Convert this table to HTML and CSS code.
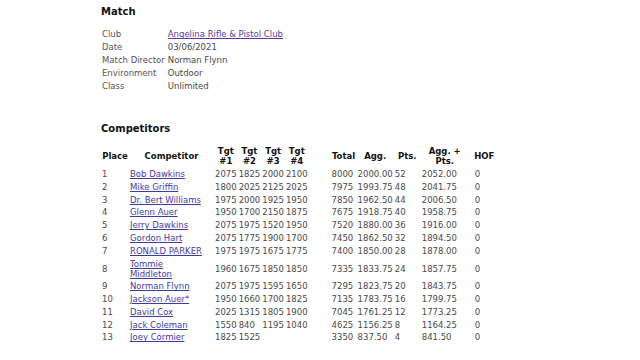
FILE: index.html
```html
<!DOCTYPE html>
<html>
<head>
<meta charset="utf-8">
<link rel="stylesheet" href="styles.css">
</head>
<body>
<div class="page">
  <h2 class="heading">Match</h2>
  <table class="info">
    <tr><td class="label">Club</td><td><a class="club" href="#">Angelina Rifle &amp; Pistol Club</a></td></tr>
    <tr><td class="label">Date</td><td>03/06/2021</td></tr>
    <tr><td class="label">Match Director</td><td>Norman Flynn</td></tr>
    <tr><td class="label">Environment</td><td>Outdoor</td></tr>
    <tr><td class="label">Class</td><td>Unlimited</td></tr>
  </table>

  <h2 class="heading second">Competitors</h2>
  <table class="results">
    <thead>
      <tr>
        <th class="c-place">Place</th>
        <th class="c-name">Competitor</th>
        <th class="c-tgt">Tgt<br>#1</th>
        <th class="c-tgt">Tgt<br>#2</th>
        <th class="c-tgt">Tgt<br>#3</th>
        <th class="c-tgt">Tgt<br>#4</th>
        <th class="c-gap"></th>
        <th class="c-total">Total</th>
        <th class="c-agg">Agg.</th>
        <th class="c-pts">Pts.</th>
        <th class="c-aggpts">Agg. +<br>Pts.</th>
        <th class="c-hof">HOF</th>
      </tr>
    </thead>
    <tbody>
      <tr><td>1</td><td><a href="#">Bob Dawkins</a></td><td>2075</td><td>1825</td><td>2000</td><td>2100</td><td></td><td>8000</td><td>2000.00</td><td>52</td><td>2052.00</td><td class="hof">0</td></tr>
      <tr><td>2</td><td><a href="#">Mike Griffin</a></td><td>1800</td><td>2025</td><td>2125</td><td>2025</td><td></td><td>7975</td><td>1993.75</td><td>48</td><td>2041.75</td><td class="hof">0</td></tr>
      <tr><td>3</td><td><a href="#">Dr. Bert Williams</a></td><td>1975</td><td>2000</td><td>1925</td><td>1950</td><td></td><td>7850</td><td>1962.50</td><td>44</td><td>2006.50</td><td class="hof">0</td></tr>
      <tr><td>4</td><td><a href="#">Glenn Auer</a></td><td>1950</td><td>1700</td><td>2150</td><td>1875</td><td></td><td>7675</td><td>1918.75</td><td>40</td><td>1958.75</td><td class="hof">0</td></tr>
      <tr><td>5</td><td><a href="#">Jerry Dawkins</a></td><td>2075</td><td>1975</td><td>1520</td><td>1950</td><td></td><td>7520</td><td>1880.00</td><td>36</td><td>1916.00</td><td class="hof">0</td></tr>
      <tr><td>6</td><td><a href="#">Gordon Hart</a></td><td>2075</td><td>1775</td><td>1900</td><td>1700</td><td></td><td>7450</td><td>1862.50</td><td>32</td><td>1894.50</td><td class="hof">0</td></tr>
      <tr><td>7</td><td><a href="#">RONALD PARKER</a></td><td>1975</td><td>1975</td><td>1675</td><td>1775</td><td></td><td>7400</td><td>1850.00</td><td>28</td><td>1878.00</td><td class="hof">0</td></tr>
      <tr><td>8</td><td><a class="wrap" href="#">Tommie Middleton</a></td><td>1960</td><td>1675</td><td>1850</td><td>1850</td><td></td><td>7335</td><td>1833.75</td><td>24</td><td>1857.75</td><td class="hof">0</td></tr>
      <tr><td>9</td><td><a href="#">Norman Flynn</a></td><td>2075</td><td>1975</td><td>1595</td><td>1650</td><td></td><td>7295</td><td>1823.75</td><td>20</td><td>1843.75</td><td class="hof">0</td></tr>
      <tr><td>10</td><td><a href="#">Jackson Auer*</a></td><td>1950</td><td>1660</td><td>1700</td><td>1825</td><td></td><td>7135</td><td>1783.75</td><td>16</td><td>1799.75</td><td class="hof">0</td></tr>
      <tr><td>11</td><td><a href="#">David Cox</a></td><td>2025</td><td>1315</td><td>1805</td><td>1900</td><td></td><td>7045</td><td>1761.25</td><td>12</td><td>1773.25</td><td class="hof">0</td></tr>
      <tr><td>12</td><td><a href="#">Jack Coleman</a></td><td>1550</td><td>840</td><td>1195</td><td>1040</td><td></td><td>4625</td><td>1156.25</td><td>8</td><td>1164.25</td><td class="hof">0</td></tr>
      <tr><td>13</td><td><a href="#">Joey Cormier</a></td><td>1825</td><td>1525</td><td></td><td></td><td></td><td>3350</td><td>837.50</td><td>4</td><td>841.50</td><td class="hof">0</td></tr>
    </tbody>
  </table>
</div>
</body>
</html>
```

FILE: styles.css
```css
html, body {
  margin: 0;
  padding: 0;
  background: #ffffff;
}

.page {
  padding: 6px 0 0 101px;
  font-family: "DejaVu Sans", Verdana, sans-serif;
  font-size: 8.5px;
  line-height: 10px;
  color: #444444;
}

.heading {
  font-size: 10px;
  line-height: 12px;
  font-weight: bold;
  color: #111111;
  margin: 0 0 9px 0;
}

.heading.second {
  margin-top: 30px;
  margin-bottom: 9px;
}

table {
  border-collapse: separate;
  border-spacing: 2px;
  margin-left: -1px;
  font-size: 8.5px;
  line-height: 10px;
}

td, th {
  padding: 0.4px 0;
  vertical-align: middle;
}

td {
  text-align: left;
  color: #4a4a4a;
}

th {
  font-weight: bold;
  color: #111111;
  text-align: center;
}

.info .label {
  color: #555555;
  padding-right: 1px;
}

a {
  color: #3f3c9c;
  text-decoration: underline;
}

a.club {
  color: #5b3a9a;
}

a.wrap {
  display: inline-block;
  max-width: 60px;
}

.results .c-place { width: 26px; }
.results .c-name { width: 83px; }
.results .c-tgt { width: 21px; }
.results .c-gap { width: 20px; }
.results .c-total { width: 24px; }
.results .c-agg { width: 33px; }
.results .c-pts { width: 25px; }
.results .c-aggpts { width: 46px; }
.results .c-hof { width: 29px; }

.results td.hof {
  padding-left: 5px;
}
```
